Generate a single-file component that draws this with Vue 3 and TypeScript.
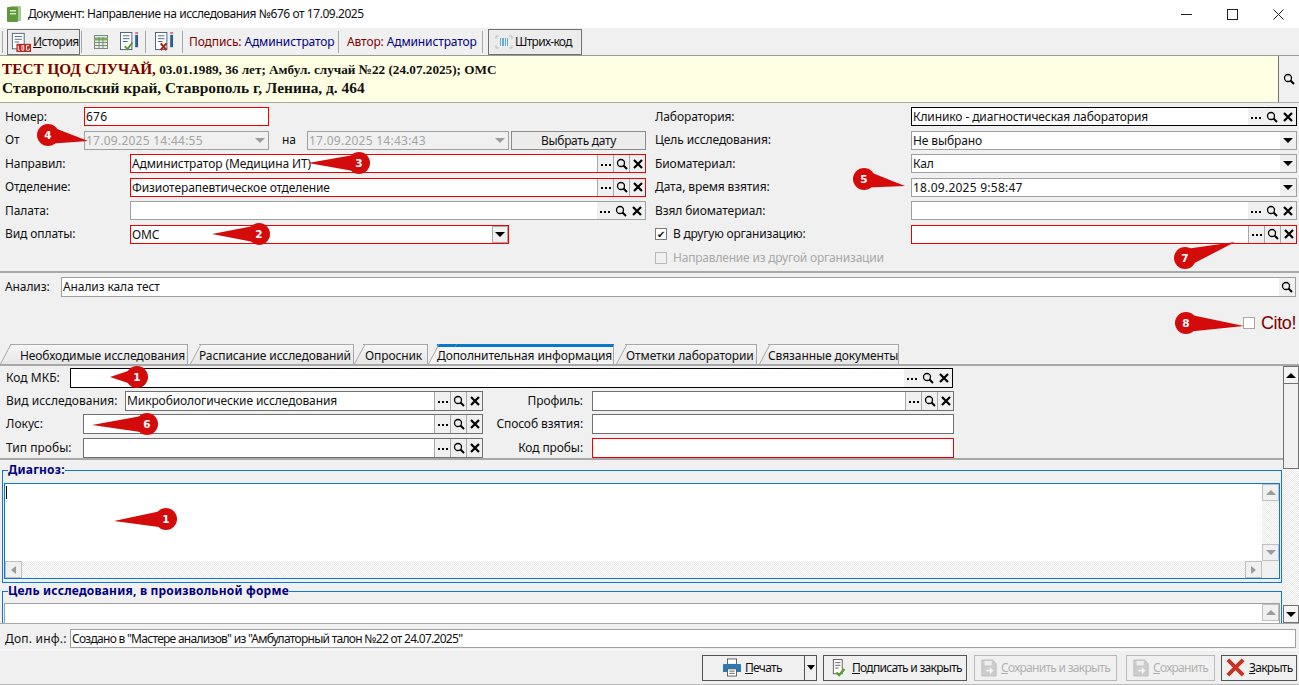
<script setup lang="ts">
const lk = ['dots', 'search', 'x']
const tabs = [
  { t: 'Необходимые исследования', c: 'w1' },
  { t: 'Расписание исследований', c: 'w2' },
  { t: 'Опросник', c: 'w3' },
  { t: 'Дополнительная информация', c: 'w4 active' },
  { t: 'Отметки лаборатории', c: 'w5' },
  { t: 'Связанные документы', c: 'w6' },
]
const marks = [
  { n: 1, x: 137, y: 377, tx: 110, ty: 377 },
  { n: 2, x: 259, y: 234, tx: 212, ty: 234 },
  { n: 3, x: 359, y: 163, tx: 308, ty: 163 },
  { n: 4, x: 48, y: 135, tx: 88, ty: 141 },
  { n: 5, x: 864, y: 179, tx: 905, ty: 186 },
  { n: 6, x: 147, y: 424, tx: 92, ty: 425 },
  { n: 7, x: 1185, y: 258, tx: 1235, ty: 242 },
  { n: 8, x: 1186, y: 323, tx: 1244, ty: 326 },
  { n: 1, x: 166, y: 519, tx: 114, ty: 521 },
]
function tail(m: { x: number; y: number; tx: number; ty: number }): string {
  const dx = m.tx - m.x
  const dy = m.ty - m.y
  const l = Math.hypot(dx, dy)
  const nx = (-dy / l) * 9
  const ny = (dx / l) * 9
  return `${m.x + nx},${m.y + ny} ${m.tx},${m.ty} ${m.x - nx},${m.y - ny}`
}
</script>

<template>
  <div class="win">
    <svg class="defs" width="0" height="0">
      <defs>
        <symbol id="dots" viewBox="0 0 12 12"><path d="M1 6h2v2H1zM5 6h2v2H5zM9 6h2v2H9z" fill="#000" /></symbol>
        <symbol id="search" viewBox="0 0 12 12"><circle cx="5" cy="5" r="3.5" fill="none" stroke="#000" stroke-width="1.3" /><path d="M7.5 7.5 11 11" stroke="#000" stroke-width="2" /></symbol>
        <symbol id="x" viewBox="0 0 12 12"><path d="M2 2l8 8M10 2l-8 8" stroke="#000" stroke-width="2.2" /></symbol>
      </defs>
    </svg>

    <header class="title">
      <svg class="appicon" viewBox="0 0 14 16"><rect x="3" y="0" width="11" height="15" rx="1" fill="#a9c78e" /><rect x="0" y="1" width="11" height="15" rx="1" fill="#5e9a3d" /><path d="M3 4h6v1.5H3zM3 7h6v1.5H3z" fill="#d8ecc4" /></svg>
      <span class="title-text">Документ: Направление на исследования №676 от 17.09.2025</span>
      <div class="winbtns">
        <svg viewBox="0 0 11 11"><path d="M0 5.5h11" stroke="#222" /></svg>
        <svg viewBox="0 0 11 11"><rect x=".5" y=".5" width="10" height="10" fill="none" stroke="#222" /></svg>
        <svg viewBox="0 0 11 11"><path d="M.5.5l10 10M10.5.5l-10 10" stroke="#222" /></svg>
      </div>
    </header>

    <nav class="toolbar">
      <i class="sep" />
      <div class="tbtn hist">
        <svg class="ti" viewBox="0 0 22 22"><rect x="1.5" y="1.5" width="13" height="17" fill="#fff" stroke="#49607c" /><path d="M4 5h8M4 8h8M4 11h5" stroke="#49607c" /><rect x="6" y="13" width="16" height="9" fill="#b92b22" /><path d="M8 15v5h2M12 15h2v5h-2zM20 15h-3v5h3v-2" fill="none" stroke="#fff" /></svg>
        <span><u>И</u>стория</span>
      </div>
      <i class="sep" />
      <svg class="ti grid" viewBox="0 0 16 16"><rect x="1.5" y="1.5" width="13" height="13" fill="#e8efe0" stroke="#7a8a80" /><path d="M1.5 5h13" stroke="#7cb15c" stroke-width="3" /><path d="M1.5 8.5h13M1.5 11.5h13M6 3v12M10 3v12" stroke="#7a8a80" /></svg>
      <svg class="ti sign" viewBox="0 0 20 22"><rect x=".5" y="1.5" width="12" height="18" fill="#fff" stroke="#49607c" /><path d="M3 5h7M3 8h7M3 11h5" stroke="#49607c" /><path d="M5 16l3 3 5-7" fill="none" stroke="#5c9c2c" stroke-width="2" /><path d="M16 1h3v2h-3z" fill="#d9766f" /><path d="M16 4h3v13h-3z" fill="#2b5d8d" /></svg>
      <i class="sep s3" />
      <svg class="ti unsign" viewBox="0 0 20 22"><rect x=".5" y="1.5" width="12" height="18" fill="#fff" stroke="#49607c" /><path d="M3 5h7M3 8h7M3 11h5" stroke="#49607c" /><path d="M6 13l6 7M12 13l-6 7" stroke="#a8281f" stroke-width="2.2" /><path d="M16 1h3v2h-3z" fill="#d9766f" /><path d="M16 4h3v13h-3z" fill="#2b5d8d" /></svg>
      <i class="sep s4" />
      <span class="meta m1"><span class="mk">Подпись:</span> <span class="mv">Администратор</span></span>
      <i class="sep s5" />
      <span class="meta m2"><span class="mk">Автор:</span> <span class="mv">Администратор</span></span>
      <i class="sep s6" />
      <div class="tbtn bar">
        <svg class="bi" viewBox="0 0 18 14"><path d="M1 4V1h3M14 1h3v3M17 10v3h-3M4 13H1v-3" fill="none" stroke="#bbb" /><path d="M5 3h1v8H5zM7 3h2v8H7zM10 3h1v8h-1zM12 3h1v8h-1z" fill="#6aa8d8" /></svg>
        <span>Штрих-код</span>
      </div>
    </nav>

    <section class="banner">
      <div class="banner-text">
        <div class="l1"><b class="pat">ТЕСТ ЦОД СЛУЧАЙ,</b> 03.01.1989, 36 лет; Амбул. случай №22 (24.07.2025); ОМС</div>
        <div class="l2">Ставропольский край, Ставрополь г, Ленина, д. 464</div>
      </div>
      <div class="banner-btn"><svg><use href="#search" /></svg></div>
    </section>

    <section class="form">
      <div class="col left">
        <div class="row"><label class="lb">Номер:</label><div class="fld red num"><span class="val date">676</span></div></div>
        <div class="row">
          <label class="lb">От</label>
          <div class="fld off num"><span class="val date">17.09.2025 14:44:55</span><i class="dd"><b class="tri grey" /></i></div>
          <label class="na">на</label>
          <div class="fld off dt2"><span class="val date">17.09.2025 14:43:43</span><i class="dd"><b class="tri grey" /></i></div>
          <div class="choose">Выбрать дату</div>
        </div>
        <div class="row"><label class="lb">Направил:</label><div class="fld red grow"><span class="val">Администратор (Медицина ИТ)</span><i v-for="k in lk" :key="k" class="b boxed"><svg><use :href="'#' + k" /></svg></i></div></div>
        <div class="row"><label class="lb">Отделение:</label><div class="fld red grow"><span class="val">Физиотерапевтическое отделение</span><i v-for="k in lk" :key="k" class="b boxed"><svg><use :href="'#' + k" /></svg></i></div></div>
        <div class="row"><label class="lb">Палата:</label><div class="fld grow"><span class="val" /><i v-for="k in lk" :key="k" class="b"><svg><use :href="'#' + k" /></svg></i></div></div>
        <div class="row"><label class="lb">Вид оплаты:</label><div class="fld red pay"><span class="val">ОМС</span><i class="dd boxed"><b class="tri" /></i></div></div>
      </div>
      <div class="col right">
        <div class="row"><label class="rl">Лаборатория:</label><div class="fld dark grow"><span class="val">Клинико - диагностическая лаборатория</span><i v-for="k in lk" :key="k" class="b"><svg><use :href="'#' + k" /></svg></i></div></div>
        <div class="row"><label class="rl">Цель исследования:</label><div class="fld grow"><span class="val">Не выбрано</span><i class="dd"><b class="tri" /></i></div></div>
        <div class="row"><label class="rl">Биоматериал:</label><div class="fld grow"><span class="val">Кал</span><i class="dd"><b class="tri" /></i></div></div>
        <div class="row"><label class="rl">Дата, время взятия:</label><div class="fld grow"><span class="val date">18.09.2025 9:58:47</span><i class="dd"><b class="tri" /></i></div></div>
        <div class="row"><label class="rl">Взял биоматериал:</label><div class="fld grow"><span class="val" /><i v-for="k in lk" :key="k" class="b"><svg><use :href="'#' + k" /></svg></i></div></div>
        <div class="row"><label class="rl chk"><i class="cb on">✔</i>В другую организацию:</label><div class="fld red grow"><span class="val" /><i v-for="k in lk" :key="k" class="b boxed"><svg><use :href="'#' + k" /></svg></i></div></div>
        <div class="row"><label class="rl chk dis"><i class="cb off" />Направление из другой организации</label></div>
      </div>
    </section>

    <section class="analysis">
      <label>Анализ:</label>
      <div class="fld grow"><span class="val">Анализ кала тест</span><i class="b"><svg><use href="#search" /></svg></i></div>
    </section>

    <section class="cito"><i class="cb cito-cb" /><span>Cito!</span></section>

    <div class="tabs">
      <div v-for="t in tabs" :key="t.t" class="tab" :class="t.c"><span>{{ t.t }}</span></div>
    </div>

    <section class="panel">
      <div class="scroll-body">
        <div class="add">
          <div class="arow"><label class="al">Код МКБ:</label><div class="fld dark mkb"><span class="val" /><i v-for="k in lk" :key="k" class="b"><svg><use :href="'#' + k" /></svg></i></div></div>
          <div class="arow">
            <label class="al">Вид исследования:</label>
            <div class="fld dg vid"><span class="val">Микробиологические исследования</span><i v-for="k in lk" :key="k" class="b boxed"><svg><use :href="'#' + k" /></svg></i></div>
            <label class="ar">Профиль:</label>
            <div class="fld dg rt"><span class="val" /><i v-for="k in lk" :key="k" class="b boxed"><svg><use :href="'#' + k" /></svg></i></div>
          </div>
          <div class="arow">
            <label class="al">Локус:</label>
            <div class="fld dg lok"><span class="val" /><i v-for="k in lk" :key="k" class="b boxed"><svg><use :href="'#' + k" /></svg></i></div>
            <label class="ar">Способ взятия:</label>
            <div class="fld dg rt"><span class="val" /></div>
          </div>
          <div class="arow">
            <label class="al">Тип пробы:</label>
            <div class="fld dg lok"><span class="val" /><i v-for="k in lk" :key="k" class="b boxed"><svg><use :href="'#' + k" /></svg></i></div>
            <label class="ar">Код пробы:</label>
            <div class="fld red rt"><span class="val" /></div>
          </div>
        </div>

        <fieldset class="group diag">
          <legend>Диагноз:</legend>
          <div class="memo">
            <div class="memo-main">
              <div class="memo-text"><i class="caret" /></div>
              <div class="vbar">
                <i class="sb"><b class="tri up grey" /></i>
                <i class="hatch" />
                <i class="sb"><b class="tri grey" /></i>
              </div>
            </div>
            <div class="hbar">
              <i class="sb"><b class="tri lf grey" /></i>
              <i class="hatch" />
              <i class="sb"><b class="tri rg grey" /></i>
              <i class="corner" />
            </div>
          </div>
        </fieldset>

        <fieldset class="group goal">
          <legend>Цель исследования, в произвольной форме</legend>
          <div class="goal-box"><i class="sb"><b class="tri up grey" /></i></div>
        </fieldset>
      </div>
      <div class="vscroll">
        <i class="sbig"><b class="tri up" /></i>
        <i class="thumb" />
        <i class="hatch" />
        <i class="sbig"><b class="tri" /></i>
      </div>
    </section>

    <section class="extra">
      <label>Доп. инф.:</label>
      <div class="fld grow"><span class="val tight">Создано в "Мастере анализов" из "Амбулаторный талон №22 от 24.07.2025"</span></div>
    </section>

    <footer class="actions">
      <div class="act print">
        <div class="pmain">
          <svg class="ai" viewBox="0 0 20 20"><rect x="5" y=".5" width="10" height="6" fill="#fff" stroke="#555" /><path d="M0 7q0-1 1-1h18q1 0 1 1v8H0z" fill="#2b78b4" /><rect x="5" y="11.5" width="10" height="8" fill="#fff" stroke="#555" /><path d="M7 14h6M7 16.500h6" stroke="#555" /></svg>
          <span><u>П</u>ечать</span>
        </div>
        <div class="parrow"><b class="tri" /></div>
      </div>
      <div class="act signc">
        <svg class="ai s" viewBox="0 0 18 20"><rect x="1.500" y=".5" width="10" height="16" fill="#fff" stroke="#555" /><path d="M3.500 4h6M3.500 7h6M3.500 10h4" stroke="#555" /><path d="M5 15l3 3 6-7" fill="none" stroke="#5c9c2c" stroke-width="2.600" /></svg>
        <span><u>П</u>одписать и закрыть</span>
      </div>
      <div class="act dis savec">
        <svg class="ai s" viewBox="0 0 18 20"><path d="M1 1h12l4 4v14H1z" fill="#ccc" stroke="#bbb" /><rect x="4" y="2" width="8" height="5" fill="#eee" /><path d="M6 12h4V9l4 4-4 4v-3H6z" fill="#f4f4f4" /></svg>
        <span><u>С</u>охранить и закрыть</span>
      </div>
      <div class="act dis save">
        <svg class="ai s" viewBox="0 0 18 20"><path d="M1 1h12l4 4v14H1z" fill="#ccc" stroke="#bbb" /><rect x="4" y="2" width="8" height="5" fill="#eee" /><path d="M6 12h4V9l4 4-4 4v-3H6z" fill="#f4f4f4" /></svg>
        <span><u>С</u>охранить</span>
      </div>
      <div class="act close">
        <svg class="ai x" viewBox="0 0 20 20"><path d="M2 2l16 16M18 2 2 18" stroke="#c8301f" stroke-width="4" /></svg>
        <span><u>З</u>акрыть</span>
      </div>
    </footer>

    <svg class="marks" viewBox="0 0 1299 685" width="1299" height="685">
      <g v-for="(m, i) in marks" :key="i">
        <polygon :points="tail(m)" fill="#d40b0b" />
        <circle :cx="m.x" :cy="m.y" r="11" fill="#d40b0b" />
        <text :x="m.x" :y="m.y + 4" text-anchor="middle" class="mark-n">{{ m.n }}</text>
      </g>
    </svg>
  </div>
</template>

<style scoped>
.win {
  position: relative;
  width: 1299px;
  height: 685px;
  overflow: hidden;
  display: flex;
  flex-direction: column;
  background: #f0f0f0;
  color: #111;
  font: 12px/14px "Noto Sans", sans-serif;
  letter-spacing: -0.1px;
}
.defs { position: absolute; }
i { font-style: normal; display: block; }
label { white-space: nowrap; }

.title { height: 28px; flex: none; background: #fff; display: flex; align-items: center; padding-left: 7px; }
.appicon { width: 14px; height: 16px; margin-right: 7px; }
.title-text { font-size: 12px; letter-spacing: -0.45px; }
.winbtns { margin-left: auto; display: flex; gap: 35px; padding-right: 15px; }
.winbtns svg { width: 11px; height: 11px; }

.toolbar { height: 28px; flex: none; display: flex; align-items: center; background: #f0f0f0; border-bottom: 1px solid #9a9a9a; padding-left: 2px; box-sizing: border-box; }
.sep { width: 1px; height: 22px; background: #a8a8a8; flex: none; }
.tbtn { display: flex; align-items: center; border: 1px solid #707070; height: 26px; box-sizing: border-box; background: #ececec; font-size: 12px; letter-spacing: -0.5px; }
.hist { width: 73px; margin: 0 1px 0 4px; padding-left: 3px; gap: 2px; }
.hist .ti { width: 20px; height: 20px; }
.ti { flex: none; }
.grid { width: 16px; height: 16px; margin: 0 11px 0 11px; }
.sign { width: 19px; height: 21px; margin-right: 6px; }
.s3 { margin-right: 9px; }
.unsign { width: 19px; height: 21px; margin-right: 8px; }
.s4 { margin-right: 6px; }
.s5 { margin: 0 8px 0 4px; }
.s6 { margin: 0 5px 0 5px; }
.meta { white-space: nowrap; letter-spacing: -0.12px; flex: none; }
.m1 { width: 145px; }
.m2 { width: 130px; }
.mk { color: #800000; }
.mv { color: #000080; }
.bar { width: 94px; padding-left: 6px; gap: 2px; letter-spacing: -0.7px; }
.bi { width: 18px; height: 14px; }

.banner { height: 46px; flex: none; display: flex; background: #ffffe3; border-bottom: 1px solid #a8a8a8; font-family: "Liberation Serif", serif; font-weight: 700; letter-spacing: 0; }
.banner-text { flex: 1; padding: 4px 0 0 2px; }
.l1 { font-size: 13.2px; line-height: 18px; }
.pat { color: #7a0000; font-size: 15.3px; }
.l2 { font-size: 15.4px; line-height: 20px; margin-top: -1px; }
.banner-btn { width: 20px; background: #f0f0f0; border-left: 1px solid #707070; display: flex; align-items: center; justify-content: center; }
.banner-btn svg { width: 12px; height: 12px; }

.form { height: 170px; flex: none; display: flex; border-bottom: 2px solid #a8a8a8; box-sizing: border-box; padding-top: 2px; }
.col { display: grid; grid-auto-rows: 23.5px; align-content: start; }
.left { width: 650px; padding: 0 4px 0 5px; box-sizing: border-box; flex: none; }
.right { flex: 1; padding: 0 2px 0 5px; }
.row { display: flex; align-items: center; min-width: 0; }
.lb { width: 125px; flex: none; }
.rl { width: 256px; flex: none; }
.chk { display: flex; align-items: center; letter-spacing: -0.2px; }
.dis { color: #a8a8a8; }

.fld { height: 19px; box-sizing: border-box; border: 1px solid #a0a0a0; background: #fff; display: flex; align-items: stretch; flex: none; }
.grow { flex: 1; min-width: 0; }
.red { border-color: #ee0000; }
.dark { border-color: #000; }
.dg { border-color: #707070; }
.off { background: #f0f0f0; color: #a4a4a4; }
.val { flex: 1; padding-left: 1px; white-space: nowrap; overflow: hidden; line-height: 17px; }
.date { letter-spacing: 0.25px; }
.tight { letter-spacing: -0.72px; }
.num { width: 185px; margin-left: -46px; }
.dt2 { width: 202px; }
.na { width: 38px; padding-left: 13px; box-sizing: border-box; flex: none; }
.choose { width: 135px; height: 19px; margin-left: 2px; box-sizing: border-box; border: 1px solid #8a8a8a; background: #ececec; text-align: center; line-height: 17px; flex: none; letter-spacing: -0.3px; }
.pay { width: 379px; }
.b { width: 16px; flex: none; background: #f0f0f0; display: flex; align-items: center; justify-content: center; box-sizing: border-box; }
.b svg { width: 12px; height: 12px; }
.boxed { border-left: 1px solid #a8a8a8; }
.dd { width: 16px; flex: none; background: #f0f0f0; display: flex; align-items: center; justify-content: center; box-sizing: border-box; }
.dd.boxed { border: 1px solid #a8a8a8; }
.tri { display: block; width: 0; height: 0; border: 5px solid transparent; border-top: 5px solid #000; border-bottom: 0; }
.tri.grey { border-top-color: #9c9c9c; }
.tri.up { border-top: 0; border-bottom: 5px solid #000; }
.tri.up.grey { border-bottom-color: #9c9c9c; }
.tri.lf { border: 4px solid transparent; border-left: 0; border-right: 5px solid #9c9c9c; }
.tri.rg { border: 4px solid transparent; border-right: 0; border-left: 5px solid #9c9c9c; }
.cb { width: 10px; height: 10px; flex: none; border: 1px solid #7a7a7a; background: #fff; margin-right: 6px; font-size: 10px; line-height: 10px; text-align: center; letter-spacing: 0; }
.cb.off { border-color: #b8b8b8; background: #f0f0f0; }

.analysis { height: 20px; flex: none; display: flex; align-items: center; padding: 4px 3px 4px 5px; }
.analysis label { width: 56px; flex: none; }
.analysis .fld { height: 20px; }

.cito { height: 39px; flex: none; display: flex; align-items: center; justify-content: flex-end; padding: 0 3px 4px 0; box-sizing: border-box; margin-top: 4px; font: 18px/20px "Liberation Sans", sans-serif; letter-spacing: -0.4px; color: #800000; }
.cito-cb { border-color: #a8a8a8; margin-right: 6px; }

.tabs { height: 20px; flex: none; display: flex; align-items: stretch; }
.tab { position: relative; box-sizing: border-box; background: linear-gradient(#f6f6f6, #e6e6e6); border-top: 1px solid #a8a8a8; border-right: 1px solid #a8a8a8; padding: 4px 0 0 0; white-space: nowrap; }
.tab::before { content: ""; position: absolute; left: -9px; top: -1px; bottom: 0; width: 18px; background: linear-gradient(#f6f6f6, #e6e6e6); border-left: 1px solid #a8a8a8; border-top: 1px solid #a8a8a8; transform: skewX(-28deg); transform-origin: bottom; box-sizing: border-box; z-index: 0; }
.tab span { position: relative; z-index: 1; }
.w1 { width: 175px; margin-left: 13px; padding-left: 7px; }
.w1::before { left: -13px; width: 22px; }
.w2 { width: 155px; margin-left: 11px; }
.w3 { width: 65px; margin-left: 9px; padding-left: 2px; }
.w4 { width: 177px; margin-left: 9px; }
.w5 { width: 132px; margin-left: 11px; padding-left: 1px; }
.w6 { width: 131px; margin-left: 11px; }
.active { background: #f4f4f4; border-top: 3px solid #0a78c8; padding-top: 2px; z-index: 2; }
.active::before { background: #f4f4f4; top: -3px; border-top: 3px solid #0a78c8; }

.panel { height: 259px; flex: none; display: flex; border-top: 2px solid #a8a8a8; overflow: hidden; box-sizing: border-box; position: relative; z-index: 3; background: #f0f0f0; }
.scroll-body { width: 1283px; flex: none; overflow: hidden; }
.add { height: 94px; box-sizing: border-box; border-bottom: 2px solid #a8a8a8; padding: 0 0 0 6px; display: grid; grid-auto-rows: 23.4px; }
.arow { display: flex; align-items: center; }
.al { width: 77px; flex: none; letter-spacing: 0.02px; }
.arow .fld { height: 20px; }
.mkb { width: 883px; margin-left: -13px; }
.vid { width: 358px; margin-left: 42px; }
.lok { width: 400px; }
.ar { width: 100px; flex: none; text-align: right; margin-right: 9px; }
.rt { width: 362px; }

.group { margin: 2px 1px 0 2px; padding: 0 1px; border: 1px solid #0a78d4; box-sizing: border-box; min-width: 0; }
.group legend { color: #000080; font-weight: 700; padding: 0; margin-left: 4px; letter-spacing: 0.2px; line-height: 16px; }
.diag { height: 121px; }
.memo { height: 96px; border: 1px solid #0a78d4; background: #fff; display: flex; flex-direction: column; box-sizing: border-box; margin-top: 5px; }
.memo-main { flex: 1; display: flex; min-height: 0; }
.memo-text { flex: 1; padding: 2px 0 0 1px; }
.caret { width: 1px; height: 13px; background: #000; }
.vbar { width: 17px; display: flex; flex-direction: column; }
.hbar { height: 17px; display: flex; }
.sb { width: 17px; height: 17px; flex: none; background: #f0f0f0; border: 1px solid #c0c0c0; box-sizing: border-box; display: flex; align-items: center; justify-content: center; }
.corner { width: 17px; height: 17px; background: #f0f0f0; flex: none; }
.hatch { flex: 1; background: repeating-conic-gradient(#e8e8e8 0 25%, #fff 0 50%) 0 0 / 2px 2px; }
.goal { height: 42px; margin-top: 0; border-bottom: 0; }
.goal-box { height: 22px; margin-top: 4px; border: 1px solid #a0a0a0; background: #fff; display: flex; justify-content: flex-end; box-sizing: border-box; }
.vscroll { width: 16px; flex: none; display: flex; flex-direction: column; background: #f0f0f0; }
.sbig { height: 18px; flex: none; background: #f4f4f4; border: 1px solid #707070; box-sizing: border-box; display: flex; align-items: center; justify-content: center; }
.thumb { height: 85px; flex: none; background: #f0f0f0; border: 1px solid #707070; border-top: 0; box-sizing: border-box; }

.extra { height: 27px; flex: none; display: flex; align-items: center; padding: 4px 3px 0 5px; border-top: 1px solid #a8a8a8; border-bottom: 1px solid #f8f8f8; box-sizing: border-box; }
.extra label { width: 65px; flex: none; letter-spacing: 0.2px; }

.actions { flex: 1; display: flex; align-items: center; padding: 0 2px 0 702px; border-top: 1px solid #f8f8f8; border-bottom: 1px solid #bbb; box-sizing: border-box; }
.act { height: 26px; box-sizing: border-box; border: 1px solid #555; background: #f0f0f0; display: flex; align-items: center; flex: none; white-space: nowrap; letter-spacing: -0.72px; }
.act.dis { border-color: #b8b8b8; color: #b0b0b0; }
.ai { width: 18px; height: 19px; flex: none; }
.ai.s { width: 16px; height: 18px; }
.print { width: 115px; }
.pmain { width: 101px; flex: none; display: flex; align-items: center; padding-left: 20px; gap: 4px; box-sizing: border-box; }
.parrow { flex: 1; height: 100%; border-left: 1px solid #555; display: flex; align-items: center; justify-content: center; }
.parrow .tri { border-width: 4px; border-top-width: 5px; border-bottom: 0; }
.signc { width: 144px; margin-left: 6px; padding-left: 8px; gap: 4px; }
.savec { width: 143px; margin-left: 7px; padding-left: 6px; gap: 4px; }
.save { width: 89px; margin-left: 9px; padding-left: 6px; gap: 4px; }
.close { width: 76px; margin-left: 6px; padding-left: 4px; gap: 4px; }
.ai.x { width: 19px; height: 19px; }

.marks { position: absolute; left: 0; top: 0; pointer-events: none; z-index: 5; }
.mark-n { fill: #fff; font: 700 10.5px "DejaVu Sans", sans-serif; letter-spacing: 0; }
</style>
